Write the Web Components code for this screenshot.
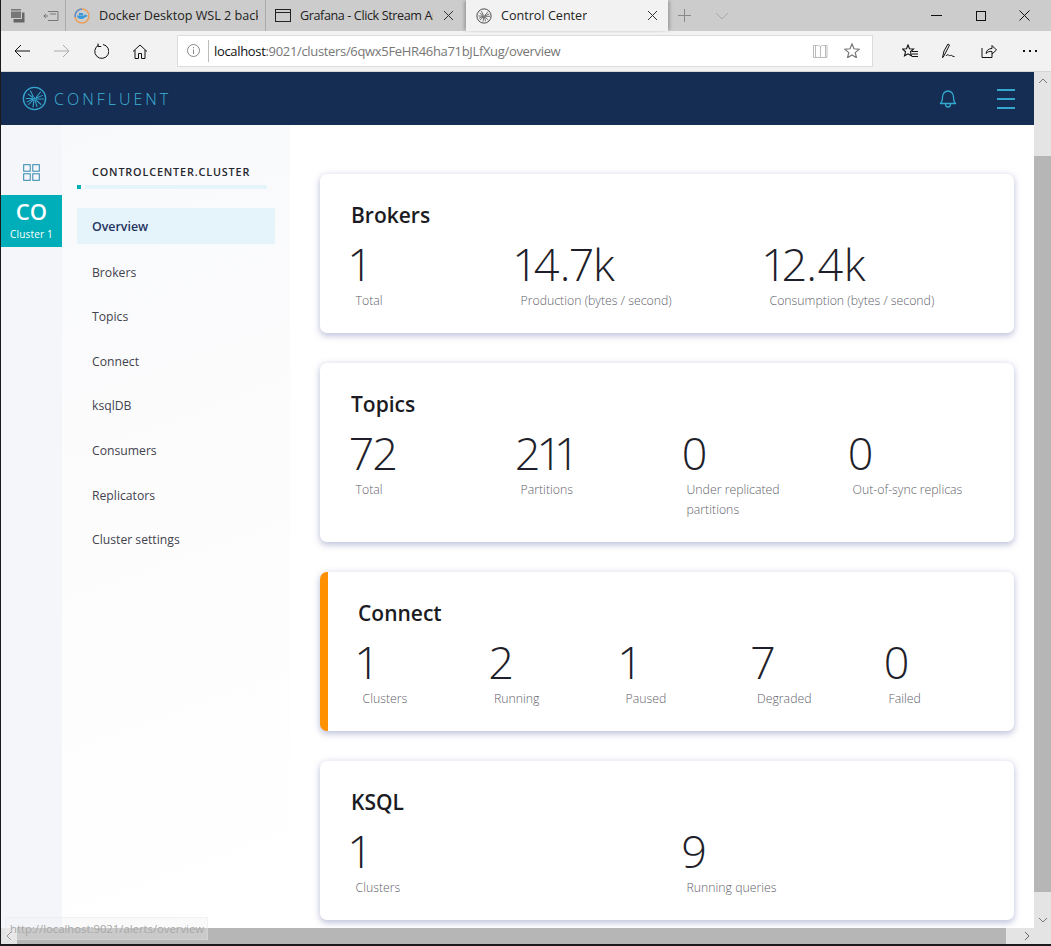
<!DOCTYPE html>
<html><head><meta charset="utf-8">
<style>
html,body{margin:0;padding:0;height:946px;overflow:hidden;background:#1a1a1a;font-family:"Open Sans","Noto Sans","Liberation Sans",sans-serif}
</style></head><body>
<browser-window>
  <browser-tabs slot="tabs"></browser-tabs>
  <browser-toolbar slot="toolbar"></browser-toolbar>
  <app-header slot="header"></app-header>
  <app-rail slot="rail"></app-rail>
  <side-nav slot="nav"></side-nav>
  <overview-page slot="main">
    <stat-card title="Brokers" cols="165px 249px 249px" data-stats='[["1","Total"],["14.7k","Production (bytes / second)"],["12.4k","Consumption (bytes / second)"]]'></stat-card>
    <stat-card title="Topics" cols="165px 166px 166px 166px" data-stats='[["72","Total"],["211","Partitions"],["0","Under replicated partitions"],["0","Out-of-sync replicas"]]'></stat-card>
    <stat-card accent title="Connect" cols="131.5px 131.5px 131.5px 131.5px 130px" data-stats='[["1","Clusters"],["2","Running"],["1","Paused"],["7","Degraded"],["0","Failed"]]'></stat-card>
    <stat-card style="margin-top:.4px" title="KSQL" cols="331px 332px" data-stats='[["1","Clusters"],["9","Running queries"]]'></stat-card>
  </overview-page>
</browser-window>
<script>
const def=(name,html,init)=>customElements.define(name,class extends HTMLElement{
  constructor(){super();this.attachShadow({mode:"open"}).innerHTML=html}
  connectedCallback(){init&&init.call(this)}
});
const ic=(w,h,vb,body,extra="")=>`<svg width="${w}" height="${h}" viewBox="${vb}" fill="none" stroke="currentColor" stroke-width="1" ${extra}>${body}</svg>`;

def("browser-window",`<style>
:host{display:block;width:1050px;height:944px;margin-left:1px;position:relative;overflow:hidden;background:#fff}
.col{display:flex;flex-direction:column;height:100%}
.body{flex:1;display:grid;grid-template-columns:minmax(0,1fr) 17px;grid-template-rows:minmax(0,1fr) 16px;min-height:0}
.app{display:flex;flex-direction:column;min-height:0;min-width:0}
.under{flex:1;display:flex;min-height:0}
.hbar{background:#b6b6b6;display:flex;justify-content:space-between;align-items:center;color:#666;grid-column:1}
.hbar .l{width:16px;height:16px;background:#e4e4e4;display:flex;align-items:center;justify-content:center}
.hbar .r{width:28px;height:16px;background:#e4e4e4;display:flex;align-items:center;justify-content:center}
.vbar{grid-row:1 / span 2;grid-column:2;background:#e4e4e4;display:flex;flex-direction:column;align-items:stretch;color:#777}
.vbar .up{height:84px;display:flex;justify-content:center;padding-top:6px;box-sizing:border-box;flex:none}
.vbar .thumb{height:736px;background:#b6b6b6;flex:none}
.vbar .down{flex:1;display:flex;justify-content:center;padding-top:25px;box-sizing:border-box}
.status{position:absolute;left:4px;bottom:4px;height:23px;width:203px;box-sizing:border-box;background:rgba(240,240,240,.35);border:1px solid rgba(225,225,225,.35);color:#a8a8a8;font:11.300px/22px "Open Sans",sans-serif;padding-left:4px;white-space:nowrap}
</style>
<div class="col"><slot name="tabs"></slot><slot name="toolbar"></slot>
<div class="body"><div class="app"><slot name="header"></slot>
<div class="under"><slot name="rail"></slot><slot name="nav"></slot><slot name="main"></slot></div></div>
<div class="vbar"><div class="up">${ic(10,6,"0 0 10 6",'<path d="M1 5l4-4 4 4"/>')}</div><div class="thumb"></div><div class="down">${ic(10,6,"0 0 10 6",'<path d="M1 1l4 4 4-4"/>')}</div></div>
<div class="hbar"><div class="l">${ic(6,10,"0 0 6 10",'<path d="M5 1L1 5l4 4"/>')}</div><div class="r">${ic(6,10,"0 0 6 10",'<path d="M1 1l4 4-4 4"/>',' style="margin-left:13px"')}</div></div>
</div></div>
<div class="status">http://localhost:9021/alerts/overview</div>`);

const dockerIcon=`<svg width="16" height="16" viewBox="0 0 16 16"><circle cx="8" cy="8" r="7" fill="none" stroke="#e8a05a" stroke-width="1.6"/><path d="M1.200 9A7 7 0 0 1 8 1" fill="none" stroke="#5b8fd8" stroke-width="1.6"/><path d="M3 9h8.500c1 0 2-.8 2.200-1.600-.5-.3-1.200-.3-1.700 0-.2-.8-.7-1.200-1.200-1.500-.3.5-.4 1-.3 1.500H3c0 2 1.500 3.500 4 3.500s4-1 4.500-2.400z" fill="#3a9ad9"/><rect x="5" y="5" width="4" height="2.200" fill="#3a9ad9"/></svg>`;
const cfIcon=(c,w)=>`<svg width="${w}" height="${w}" viewBox="0 0 24 24" fill="none" stroke="${c}"><circle cx="12" cy="12" r="10.700" stroke-width="1.300"/><g stroke-width="1"><path d="M3.500 12h7M5.500 7.500l5 3.500M8 4.500l3 6M13.500 11L18 5.500M13.500 11.500L20 9M13.500 12.500H21M13 13l5.500 5M12.500 13.500l2 6.500M11.500 13.500l-1 7M11 13l-5 5M10.500 12.500l-6 3"/></g><circle cx="12" cy="12" r="1.200" fill="${c}" stroke="none"/></svg>`;

def("browser-tabs",`<style>
:host{display:flex;height:31px;background:#ccc;color:#222;font:12.600px/30px "Open Sans",sans-serif;flex:none}
.lead{width:64px;display:flex;align-items:center;padding-left:9px;gap:18px;box-sizing:border-box;color:#555}
.tab{width:200px;display:flex;align-items:center;box-sizing:border-box;border-left:1px solid #aaa;padding-left:8px;gap:9px;white-space:nowrap;position:relative;overflow:hidden}
.tab.on{width:202px;background:#f2f2f2;border-left:0;margin-left:1px;padding-left:10px;gap:9px;box-shadow:-3px 0 3px -1px rgba(0,0,0,.22),3px 0 3px -1px rgba(0,0,0,.22);overflow:visible}
.t{flex:none;overflow:hidden;min-width:0}
.x{position:absolute;right:11px;top:10px;display:flex;color:#333}
.nw{display:flex;align-items:center;margin-left:10px;gap:24px;color:#8a8a8a}
.win{margin-left:auto;display:flex;align-items:center;color:#111;padding-right:5px}
.win span{width:44px;display:flex;justify-content:center}
</style>
<div class="lead">
${ic(15,15,"0 0 15 15",'<rect x="3.500" y="4.500" width="11" height="10" fill="#666" stroke="none"/><rect x="0.500" y="0.500" width="11" height="10" fill="#777" stroke="#ccc"/><path d="M1 3h10" stroke="#ccc"/>')}
${ic(16,12,"0 0 16 12",'<path d="M5 1.500h10v9H5M5 6H0.500M3 4L1 6l2 2M7 4h6" stroke="#777"/>')}
</div>
<div class="tab">${dockerIcon}<span class="t" style="width:159px">Docker Desktop WSL 2 backend</span></div>
<div class="tab" style="padding-left:9px">${ic(16,13,"0 0 16 13",'<rect x=".5" y=".5" width="15" height="12"/><path d="M1 3.500h14"/>')}<span class="t" style="width:133px;letter-spacing:-.4px">Grafana - Click Stream Analysis</span><span class="x">${ic(11,11,"0 0 11 11",'<path d="M1 1l9 9M10 1l-9 9"/>')}</span></div>
<div class="tab on">${cfIcon("#333",16)}<span class="t">Control Center</span><span class="x" style="right:10px">${ic(11,11,"0 0 11 11",'<path d="M1 1l9 9M10 1l-9 9"/>')}</span></div>
<div class="nw">${ic(13,13,"0 0 13 13",'<path d="M6.500 0v13M0 6.500h13"/>')}${ic(14,8,"0 0 14 8",'<path d="M1 1l6 6 6-6"/>',' style="color:#a8a8a8"')}</div>
<div class="win" style="width:132px"><span>${ic(11,1,"0 0 11 1",'<path d="M0 .5h11"/>')}</span><span style="padding-left:1px;width:43px">${ic(10,10,"0 0 10 10",'<rect x=".5" y=".5" width="9" height="9"/>')}</span><span>${ic(11,11,"0 0 11 11",'<path d="M.5.5l10 10M10.500.5l-10 10"/>')}</span></div>`);

def("browser-toolbar",`<style>
:host{display:flex;align-items:center;height:41px;box-sizing:border-box;background:#f2f2f2;border-bottom:1px solid #d6d6d6;flex:none;color:#111}
.b{display:flex;justify-content:center;align-items:center;flex:none}
.addr{width:696px;height:32px;box-sizing:border-box;background:#fff;border:1px solid #dcdcdc;margin-left:18px;margin-top:-1px;display:flex;align-items:center;font:13px "Open Sans",sans-serif;letter-spacing:-.33px;color:#777}
.addr b{font-weight:400;color:#111}
.sep{width:1px;height:22px;background:#bbb;margin:0 5px 0 1px}
.u{flex:1;white-space:nowrap}
</style>
<span class="b" style="width:40px;margin-left:1px">${ic(16,14,"0 0 16 14",'<path d="M7 1L1 7l6 6M1 7h15"/>')}</span>
<span class="b" style="width:39px;color:#aaa">${ic(16,14,"0 0 16 14",'<path d="M9 1l6 6-6 6M15 7H0"/>')}</span>
<span class="b" style="width:39px">${ic(16,16,"0 0 16 16",'<path d="M5.500 2.200A7 7 0 1 0 10 1.500M5 .5v3h3.200"/>')}</span>
<span class="b" style="width:39px">${ic(16,15,"0 0 16 15",'<path d="M1 7.500L8 1l7 6.500M3 6v8.500h3.500V9.500h3v5H13V6"/>')}</span>
<div class="addr"><span class="b" style="width:28px;color:#888;padding-left:1px">${ic(13,13,"0 0 13 13",'<circle cx="6.500" cy="6.500" r="6"/><path d="M6.500 5.500v4.500M6.500 3v1.300"/>')}</span><span class="sep"></span><span class="u"><b>localhost</b>:9021/clusters/6qwx5FeHR46ha71bJLfXug/overview</span>
<span class="b" style="width:32px;color:#bbb">${ic(15,14,"0 0 15 14",'<path d="M7.500 2v11.500M.5 1.500h2.500c2 0 3.500 0 4.500 1 1-1 2.500-1 4.500-1h2v12h-6.500h-7zM2.500 1.500v12M12.500 1.500v12"/>')}</span>
<span class="b" style="width:32px;margin-right:4px">${ic(16,15,"0 0 16 15",'<path d="M8 1l2 4.800 5.200.4-4 3.400 1.300 5.100L8 11.900l-4.500 2.800 1.300-5.100-4-3.400L6 5.800z" stroke-width="1.200"/>')}</span></div>
<span class="b" style="width:36px;margin-left:19px">${ic(17,15,"0 0 17 15",'<path d="M6 1l1.500 3.800 4 .2-3 2.800 1 4L6 9.800l-3.500 2 1-4-3-2.800 4-.2zM10 7.500h6M10 10h6M10 12.500h6" stroke-width="1.100"/>')}</span>
<span class="b" style="width:41px">${ic(16,16,"0 0 16 16",'<path d="M1.500 14.500L3 8l4-7 1.500 1-3.500 7-3 5.500zM5 13c2-3 3 .5 4.500-.5s1.500 1.500 4 1" />')}</span>
<span class="b" style="width:40px">${ic(16,14,"0 0 16 14",'<path d="M1 4v9.500h10V10M5 9.500C5.500 6 8 4.500 11 4.500V1.500l4.500 4.500-4.500 4V7.500C8.500 7 6.500 8 5 9.500z"/>')}</span>
<span class="b" style="width:42px"><svg width="14" height="2" viewBox="0 0 14 2" fill="#111"><rect width="2" height="2"/><rect x="6" width="2" height="2"/><rect x="12" width="2" height="2"/></svg></span>`);

def("app-header",`<style>
:host{display:flex;align-items:center;height:53px;background:#152c53;color:#35a7cf;flex:none;padding-left:21px}
.name{font:300 16px/1 "Open Sans",sans-serif;letter-spacing:3px;margin-left:7px;color:#3fb3d6}
.r{margin-left:auto;display:flex;align-items:center;padding-right:19px}
.h{display:block;width:18px;height:20px;background:linear-gradient(#35a7cf 0 1.500px,transparent 1.500px 9px,#35a7cf 9px 10.500px,transparent 10.500px 18px,#35a7cf 18px 19.500px,transparent 19.500px);margin-left:40px}
</style>
${cfIcon("#35a7cf",25)}<span class="name">CONFLUENT</span>
<span class="r">${ic(18,20,"0 0 18 20",'<path d="M1 14.500c2-1 2.500-3 2.500-6.500a5.500 6 0 0 1 11 0c0 3.500.5 5.500 2.500 6.500zM6.500 15c0 4 5 4 5 0" stroke-width="1.300"/>')}<span class="h"></span></span>`);

def("app-rail",`<style>
:host{display:block;width:61px;background:#f5f6fa;flex:none}
.g{display:flex;justify-content:center;padding-top:39px;height:70px;box-sizing:border-box;color:#2f86ae}
.c{height:52px;background:#00aeb9;color:#fff;text-align:center;box-sizing:border-box;padding-top:4px}
.c b{display:block;font:600 22px/24px "Open Sans",sans-serif;margin-bottom:4px}
.c span{display:block;font:500 10px/14px "Open Sans",sans-serif;letter-spacing:.2px}
</style>
<div class="g">${ic(17,17,"0 0 17 17",'<rect x=".7" y=".7" width="6.500" height="6.500"/><rect x="9.800" y=".7" width="6.500" height="6.500"/><rect x=".7" y="9.800" width="6.500" height="6.500"/><rect x="9.800" y="9.800" width="6.500" height="6.500"/>','stroke-width="1.300"')}</div>
<div class="c"><b>CO</b><span>Cluster 1</span></div>`);

def("nav-item",`<style>
:host{display:flex;align-items:center;height:36px;margin-bottom:8.650px;padding-left:15px;font:12.200px "Open Sans",sans-serif;color:#43434d}
:host([active]){background:#e5f3fb;color:#1f3460;font-weight:600;font-size:12.400px;margin-bottom:10px}
</style><slot></slot>`);

def("side-nav",`<style>
:host{display:block;width:228px;flex:none;box-sizing:border-box;padding:39px 15px 0;background:linear-gradient(160deg,#f8f9fb,#fcfcfd 40%,#fff)}
h2{margin:0;padding-left:15px;font:600 10.800px/16px "Open Sans",sans-serif;letter-spacing:.86px;color:#26262e;white-space:nowrap}
.rule{display:flex;gap:4px;margin:5px 8px 19px 0;height:4px}
.rule i{display:block;width:4px;background:#00aeb9}
.rule u{flex:1;background:#e5f3fb}
</style>
<h2>CONTROLCENTER.CLUSTER</h2><div class="rule"><i></i><u></u></div>
<nav-item active>Overview</nav-item><nav-item>Brokers</nav-item><nav-item>Topics</nav-item><nav-item>Connect</nav-item><nav-item>ksqlDB</nav-item><nav-item>Consumers</nav-item><nav-item>Replicators</nav-item><nav-item>Cluster settings</nav-item>`);

def("overview-page",`<style>
:host{flex:1;display:flex;flex-direction:column;gap:30px;padding:49px 20px 0 30px;min-width:0;background:#fff}
</style><slot></slot>`);

def("stat-item",`<style>
:host{display:block;min-width:0}
.n{font:300 45px/50px "Open Sans",sans-serif;font-variant-numeric:proportional-nums;color:#1f1f2b;letter-spacing:0;white-space:nowrap;margin-left:-.5px}
.l{font:300 12.300px/20px "Open Sans",sans-serif;color:#5f5f6b;padding-left:4.500px;margin-top:2px;max-width:120px}
.wide{max-width:none;white-space:nowrap}
</style><div class="n"></div><div class="l"></div>`,function(){
  this.shadowRoot.querySelector(".n").textContent=this.getAttribute("n");
  const l=this.shadowRoot.querySelector(".l");l.textContent=this.getAttribute("l");
  if(this.getAttribute("l")!=="Under replicated partitions")l.classList.add("wide");
});

def("stat-card",`<style>
:host{display:block;box-sizing:border-box;background:#fff;border-radius:7px;padding:26px 0 0 31px;min-height:159px;box-shadow:0 0 6px rgba(190,195,225,.35),0 3px 6px rgba(150,155,195,.55);flex:none}
:host([accent]){border-left:8px solid #ff9100;padding-left:30px}
h3{margin:0;font:600 21px/30px "Open Sans",sans-serif;color:#1b1b23}
.g{display:grid;margin-top:9px;padding-bottom:22px}
</style><h3></h3><div class="g"></div>`,function(){
  const s=this.shadowRoot;s.querySelector("h3").textContent=this.getAttribute("title");
  const g=s.querySelector(".g");g.style.gridTemplateColumns=this.getAttribute("cols");
  if(g.children.length)return;
  JSON.parse(this.dataset.stats).forEach(([n,l])=>{const e=document.createElement("stat-item");e.setAttribute("n",n);e.setAttribute("l",l);g.append(e)});
});
</script>
</body></html>
